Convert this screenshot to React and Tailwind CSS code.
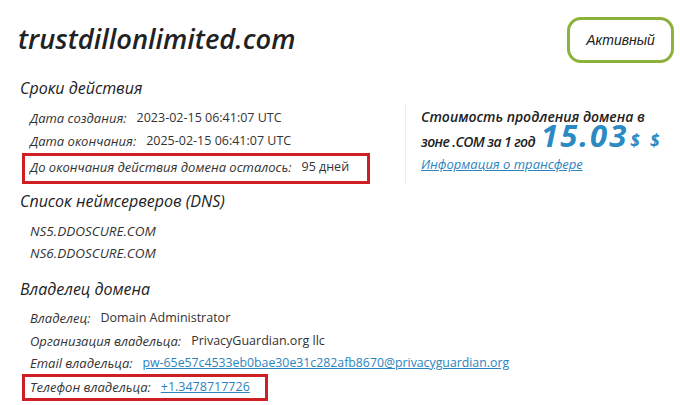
const font = { fontFamily: '"Open Sans", "Liberation Sans", sans-serif' };

function Row({ label, children, className = '' }) {
  return (
    <div className={`flex items-center h-[23px] pl-[30px] text-[#333] ${className}`}>
      <span className="italic text-[13px]">{label}</span>
      <span className="ml-[10px] text-[12.5px]">{children}</span>
    </div>
  );
}

function Heading({ children, className = '' }) {
  return (
    <div className={`h-[24px] leading-[24px] pl-[20px] text-[16px] italic text-[#222] ${className}`}>
      {children}
    </div>
  );
}

export default function App() {
  return (
    <div className="w-[680px] h-[405px] bg-white overflow-hidden" style={font}>
      <div className="flex justify-between h-[76px]">
        <h1 className="ml-[18px] mt-[21px] h-[36px] leading-[36px] text-[27.3px] font-semibold italic text-[#222]">
          trustdillonlimited.com
        </h1>
        <div className="mt-[17px] mr-[6px] w-[107px] h-[46px] flex items-center justify-center border-[3px] border-[#8cb23a] rounded-[14px]">
          <span className="text-[14px] italic text-[#222]" style={{ fontFamily: '"Liberation Sans", Arial, sans-serif' }}>
            Активный
          </span>
        </div>
      </div>

      <Heading>Сроки действия</Heading>

      <div className="flex">
        <div className="w-[405px] mt-[7px]">
          <Row label="Дата создания:">2023-02-15 06:41:07 UTC</Row>
          <Row label="Дата окончания:">2025-02-15 06:41:07 UTC</Row>
          <div className="ml-[22px] w-[348px] h-[31px] border-[3px] border-[#cf1f25] flex items-center pl-[5px] pb-[2px] text-[#333]">
            <span className="italic text-[13px]">До окончания действия домена осталось:</span>
            <span className="ml-[10px] text-[12.5px]">95 дней</span>
          </div>
        </div>

        <div className="mt-[3px] h-[82px] border-l border-[#ececec] pl-[15px] pt-[2px]">
          <div className="h-[24px] leading-[24px] text-[14px] font-semibold italic text-[#222]">
            Стоимость продления домена в
          </div>
          <div className="flex items-baseline h-[24px] text-[14px] font-semibold italic text-[#222]">
            <span className="leading-[24px] tracking-[-0.6px]">зоне .COM за 1 год</span>
            <span className="ml-[6px] leading-[10px] text-[31px] font-bold text-[#2b8ac3] tracking-[2px]">15.03</span>
            <span className="ml-[2px] leading-[24px] text-[17px] font-bold text-[#2b8ac3] tracking-[3px]">$ $</span>
          </div>
          <a href="#" className="block h-[22px] leading-[22px] text-[13px] italic text-[#2b84bd] underline">
            Информация о трансфере
          </a>
        </div>
      </div>

      <Heading className="mt-[4px]">Список неймсерверов (DNS)</Heading>
      <div className="mt-[7px]">
        <div className="h-[22px] leading-[22px] pl-[30px] text-[13.5px] italic text-[#333]">NS5.DDOSCURE.COM</div>
        <div className="h-[22px] leading-[22px] pl-[30px] text-[13.5px] italic text-[#333]">NS6.DDOSCURE.COM</div>
      </div>

      <Heading className="mt-[13px]">Владелец домена</Heading>
      <div className="mt-[6px]">
        <Row label="Владелец:">Domain Administrator</Row>
        <Row label="Организация владельца:">PrivacyGuardian.org llc</Row>
        <div className="flex items-center h-[21px] pl-[30px]">
          <span className="italic text-[13px] text-[#333]">Email владельца:</span>
          <a href="#" className="ml-[10px] text-[12.3px] text-[#2b84bd] underline">
            pw-65e57c4533eb0bae30e31c282afb8670@privacyguardian.org
          </a>
        </div>
        <div className="ml-[22px] w-[246px] h-[27px] border-[3px] border-[#cf1f25] flex items-center pl-[5px]">
          <span className="italic text-[13px] text-[#333]">Телефон владельца:</span>
          <a href="#" className="ml-[10px] text-[12.5px] text-[#2b84bd] underline">+1.3478717726</a>
        </div>
      </div>
    </div>
  );
}
